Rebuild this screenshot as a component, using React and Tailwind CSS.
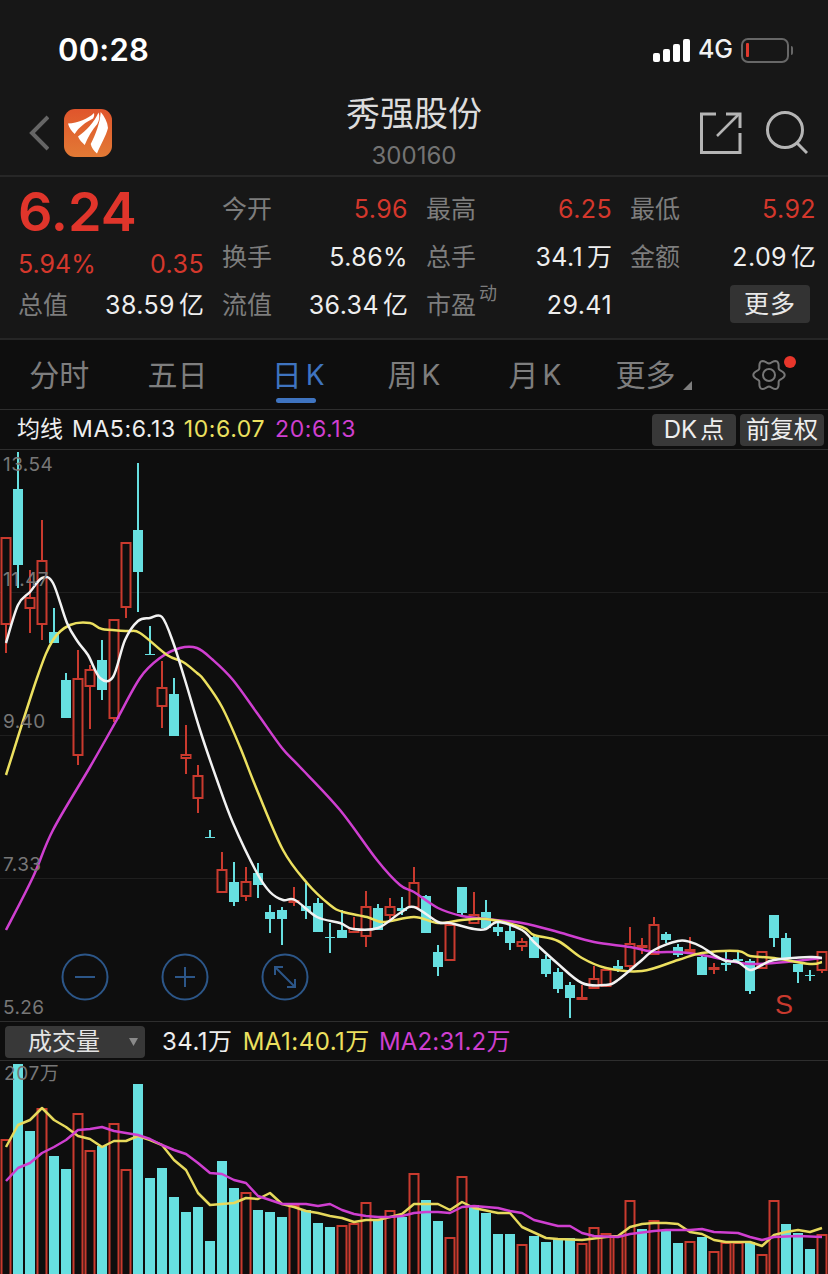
import React from "react";

const RED = "#c93a2e";
const CYAN = "#67dfe0";

// [x index is position in list] color, wickTop, bodyTop, bodyBottom, wickBottom
const candles = [
  ["r", 537, 537, 625, 653], ["c", 452, 489, 565, 588], ["r", 570, 597, 609, 633], ["r", 520, 560, 625, 640],
  ["c", 608, 632, 643, 643], ["c", 673, 680, 718, 718], ["r", 650, 678, 756, 765], ["r", 665, 669, 687, 729],
  ["c", 640, 660, 690, 700], ["r", 619, 619, 719, 722], ["r", 542, 542, 608, 618], ["c", 463, 530, 572, 612],
  ["c", 626, 654, 655, 655], ["r", 661, 687, 707, 728], ["c", 678, 694, 736, 736], ["r", 725, 754, 759, 774],
  ["r", 765, 775, 799, 813], ["c", 830, 837, 838, 838], ["r", 852, 869, 893, 893], ["c", 862, 882, 902, 906],
  ["r", 867, 881, 897, 901], ["c", 863, 873, 885, 898], ["c", 905, 912, 919, 933], ["c", 907, 910, 919, 945],
  ["r", 887, 900, 902, 906], ["c", 883, 906, 911, 919], ["c", 898, 903, 932, 932], ["c", 923, 937, 938, 953],
  ["c", 910, 930, 938, 938], ["r", 917, 928, 933, 933], ["r", 891, 906, 937, 947], ["c", 904, 908, 930, 930],
  ["r", 898, 906, 916, 920], ["c", 897, 908, 911, 915], ["r", 867, 882, 908, 908], ["c", 895, 896, 933, 933],
  ["c", 945, 952, 967, 976], ["r", 924, 924, 961, 961], ["c", 887, 887, 913, 915], ["r", 892, 914, 924, 924],
  ["c", 900, 912, 928, 928], ["c", 920, 927, 932, 936], ["c", 925, 931, 943, 950], ["r", 938, 941, 947, 951],
  ["c", 935, 937, 958, 958], ["c", 955, 959, 974, 977], ["c", 968, 972, 989, 993], ["c", 982, 985, 998, 1018],
  ["r", 985, 997, 999, 999], ["r", 966, 978, 989, 989], ["r", 968, 969, 987, 987], ["c", 960, 966, 969, 972],
  ["r", 927, 943, 967, 972], ["r", 938, 945, 948, 954], ["r", 917, 924, 955, 955], ["c", 932, 934, 940, 943],
  ["c", 944, 947, 955, 957], ["r", 937, 949, 953, 953], ["c", 952, 957, 975, 975], ["r", 963, 967, 969, 974],
  ["c", 951, 963, 965, 971], ["c", 950, 959, 961, 961], ["c", 959, 961, 991, 994], ["r", 951, 951, 969, 969],
  ["c", 915, 915, 938, 947], ["c", 933, 938, 958, 958], ["c", 964, 964, 972, 983], ["c", 970, 975, 976, 981],
  ["r", 951, 951, 971, 973],
];

const ma5 = "6,643 18,605 30,592 42,578 53,583 67,623 78,642 88,655 100,678 113,677 125,640 138,621 150,618 162,617 173,642 185,680 200,730 217,780 233,823 257,873 270,892 283,900 295,900 317,917 340,923 353,929 378,928 400,913 414,907 438,922 450,923 474,929 486,929 498,922 522,930 534,942 557,963 582,983 606,985 618,980 642,960 654,950 678,941 690,942 702,947 714,955 726,961 738,962 750,970 762,965 774,960 810,957 822,958";
const ma10 = "6,775 37,678 53,640 70,625 90,623 102,629 127,631 140,633 167,655 183,662 197,673 204,680 222,707 240,747 257,790 283,850 307,883 330,905 343,912 367,917 383,922 414,917 438,923 462,920 486,919 522,927 534,935 558,941 582,958 606,968 642,971 678,960 702,953 738,951 750,956 774,958 810,964 822,962";
const ma20 = "6,930 33,877 53,830 90,767 115,723 140,678 160,658 180,648 197,648 213,660 233,680 257,713 282,748 300,767 340,810 377,860 400,885 414,892 438,908 462,916 486,919 522,923 558,932 594,942 630,947 654,952 678,952 702,955 726,960 750,964 786,962 822,958";

// [color, top]
const volumes = [
  ["r", 1139], ["c", 1064], ["c", 1131], ["r", 1108], ["c", 1156], ["c", 1169], ["r", 1113], ["r", 1150], ["c", 1146],
  ["r", 1123], ["r", 1169], ["c", 1084], ["c", 1178], ["c", 1168], ["c", 1197], ["c", 1212], ["c", 1207], ["c", 1241],
  ["c", 1161], ["c", 1188], ["r", 1192], ["c", 1210], ["c", 1212], ["c", 1217], ["r", 1205], ["c", 1210], ["c", 1223],
  ["c", 1227], ["r", 1225], ["r", 1223], ["r", 1202], ["c", 1220], ["r", 1210], ["c", 1217], ["r", 1173], ["c", 1200],
  ["c", 1221], ["r", 1237], ["r", 1176], ["c", 1205], ["c", 1213], ["c", 1234], ["c", 1234], ["r", 1244], ["c", 1236],
  ["c", 1242], ["c", 1239], ["c", 1238], ["r", 1243], ["r", 1227], ["r", 1233], ["r", 1235], ["r", 1200], ["c", 1229],
  ["r", 1220], ["c", 1231], ["c", 1243], ["r", 1241], ["c", 1237], ["r", 1251], ["r", 1242], ["r", 1242], ["c", 1242],
  ["r", 1254], ["r", 1200], ["c", 1224], ["c", 1233], ["c", 1249], ["r", 1234],
];

const volMa1 = "6,1147 18,1125 30,1120 42,1108 54,1120 66,1127 78,1136 90,1139 102,1147 114,1141 126,1141 138,1136 150,1140 162,1145 174,1160 186,1170 198,1193 210,1205 222,1204 234,1203 246,1198 258,1199 270,1193 282,1204 294,1207 306,1211 318,1213 330,1216 342,1218 354,1222 366,1220 378,1220 390,1217 402,1214 414,1204 438,1204 450,1210 462,1202 474,1208 498,1213 510,1213 522,1227 546,1238 558,1239 582,1240 606,1237 618,1236 630,1227 642,1224 654,1223 666,1223 678,1224 690,1232 702,1234 714,1240 726,1242 750,1242 762,1246 774,1235 786,1232 798,1230 810,1232 822,1228";
const volMa2 = "6,1181 18,1168 30,1163 42,1153 54,1147 66,1140 78,1130 90,1129 102,1127 114,1131 126,1133 138,1135 150,1139 162,1145 174,1150 186,1154 198,1163 210,1173 222,1174 234,1180 246,1183 258,1196 270,1200 282,1204 294,1204 306,1204 318,1206 330,1204 342,1210 354,1214 366,1216 378,1217 390,1217 402,1216 414,1213 426,1212 438,1212 450,1213 462,1207 474,1206 498,1208 510,1211 522,1213 534,1220 546,1223 558,1226 570,1226 582,1233 594,1236 618,1237 630,1234 654,1231 666,1230 690,1230 702,1229 714,1232 738,1233 750,1237 762,1240 774,1237 798,1236 822,1237";

// six lobed outline of the settings gear
const gearPath = Array.from({ length: 73 }, (_, i) => {
  const a = (i / 72) * Math.PI * 2;
  const r = 13.6 + 2.1 * Math.cos(6 * a);
  return `${i === 0 ? "M" : "L"}${(18 + r * Math.cos(a)).toFixed(2)} ${(18 + r * Math.sin(a)).toFixed(2)}`;
}).join(" ") + "Z";

// catmull-rom through the points, the price averages are drawn as curves
function smooth(points) {
  const p = points.split(" ").map((s) => s.split(",").map(Number));
  let d = `M${p[0][0]} ${p[0][1]}`;
  for (let i = 0; i < p.length - 1; i++) {
    const a = p[Math.max(i - 1, 0)];
    const b = p[i];
    const c = p[i + 1];
    const e = p[Math.min(i + 2, p.length - 1)];
    const c1x = (b[0] + (c[0] - a[0]) / 6).toFixed(1);
    const c1y = (b[1] + (c[1] - a[1]) / 6).toFixed(1);
    const c2x = (c[0] - (e[0] - b[0]) / 6).toFixed(1);
    const c2y = (c[1] - (e[1] - b[1]) / 6).toFixed(1);
    d += ` C${c1x} ${c1y} ${c2x} ${c2y} ${c[0]} ${c[1]}`;
  }
  return d;
}

function Pair({ label, value, unit, color = "text-[#eeeeee]", sup }) {
  return (
    <div className="flex items-center justify-between">
      <span className="relative text-[#7d7d7d]">
        {label}
        {sup && <span className="absolute left-[53px] top-[1px] text-[18px] leading-[24px]">{sup}</span>}
      </span>
      <span className={`${color} tracking-[0.4px]`}>
        {value}
        {unit && <span className="ml-[4px] tracking-normal">{unit}</span>}
      </span>
    </div>
  );
}

function Tab({ label, letter, active, shift }) {
  return (
    <div className={`relative flex h-full items-center justify-center ${shift ? "pl-[5px]" : ""} ${active ? "text-[#3f74c0]" : "text-[#7e7e7e]"}`}>
      {label}
      {letter && <span className="ml-[4px] text-[28px]">{letter}</span>}
      {active && <span className="absolute bottom-[6px] left-[39px] h-[5px] w-[40px] rounded-full bg-[#3f74c0]" />}
    </div>
  );
}

function ChartButton({ children }) {
  return (
    <div className="flex h-[32px] w-[84px] items-center justify-center rounded-[4px] bg-[#383838] text-[24px] text-[#eeeeee]">
      {children}
    </div>
  );
}

function Logo() {
  return (
    <svg width="48" height="48" viewBox="0 0 48 48">
      <defs>
        <linearGradient id="logoBg" x1="0" y1="0" x2="0" y2="1">
          <stop offset="0" stopColor="#e0552c" />
          <stop offset="1" stopColor="#e27a35" />
        </linearGradient>
      </defs>
      <rect width="48" height="48" rx="11" fill="url(#logoBg)" />
      <path d="M4 14.5 C14 14 24 10 30 4 C30.5 6 30 8 29 9.5 C22 13 15 18 10.7 25 C7.5 22 5 18.5 4 14.5Z" fill="#fff" />
      <path d="M14 27.5 C22 22 30.5 13 34.5 3.5 C36 7 35.5 11 33.3 15 C28 21 24 28 20.7 36 C18 33.5 15.5 31 14 27.5Z" fill="#fff" />
      <path d="M26.7 35 C31.5 26 36 14 36.7 3 C40.5 7.5 43.5 13 44 19 C42 27 36.5 36 33 44.5 C30 42 27.5 39 26.7 35Z" fill="#fff" />
    </svg>
  );
}

function StatusBar() {
  return (
    <div className="flex h-[100px] items-center justify-between pl-[58px] pr-[35px]">
      <span className="text-[31px] font-semibold tracking-[0.2px] text-white">00:28</span>
      <div className="flex items-center">
        <div className="mb-[-1px] flex h-[23px] items-end gap-[3px]">
          <span className="h-[9px] w-[7px] rounded-[2px] bg-white" />
          <span className="h-[13px] w-[7px] rounded-[2px] bg-white" />
          <span className="h-[18px] w-[7px] rounded-[2px] bg-white" />
          <span className="h-[23px] w-[7px] rounded-[2px] bg-white" />
        </div>
        <span className="ml-[8px] text-[25px] font-medium text-[#f2f2f2]">4G</span>
        <div className="ml-[8px] flex h-[25px] w-[48px] items-center rounded-[7px] border-2 border-[#676767] pl-[3px]">
          <span className="h-[14px] w-[3px] rounded-[1px] bg-[#e0392d]" />
        </div>
        <span className="ml-[2px] h-[9px] w-[2px] rounded-r-[2px] bg-[#676767]" />
      </div>
    </div>
  );
}

function NavBar() {
  return (
    <div className="relative flex h-[77px] items-center justify-between border-b-2 border-[#272727] pb-[10px] pl-[29px] pr-[20px]">
      <div className="flex items-center gap-[15px]">
        <svg width="20" height="36" viewBox="0 0 20 36" fill="none" stroke="#666666" strokeWidth="4">
          <path d="M19 2 L3 18 L19 34" />
        </svg>
        <Logo />
      </div>
      <div className="absolute left-0 right-0 top-0 flex flex-col items-center">
        <span className="mt-[-1px] text-[34px] leading-[30px] text-[#dcdcdc]">秀强股份</span>
        <span className="mt-[13px] text-[24px] leading-[28px] text-[#737373]">300160</span>
      </div>
      <div className="flex items-center gap-[22px]">
        <svg width="44" height="44" viewBox="0 0 44 44" fill="none" stroke="#b5b5b5" strokeWidth="3">
          <path d="M18 3 H3.5 V41.5 H42 V22" />
          <path d="M19 25 L41 3" strokeWidth="2.5" />
          <path d="M28 3 H42 V17" />
        </svg>
        <svg width="44" height="44" viewBox="0 0 44 44" fill="none" stroke="#b5b5b5" strokeWidth="3">
          <circle cx="21" cy="19" r="17.5" />
          <path d="M33 32 L43 42" />
        </svg>
      </div>
    </div>
  );
}

function Quote() {
  return (
    <div className="grid h-[163px] grid-cols-[repeat(4,186px)] grid-rows-[repeat(3,48px)] gap-x-[18px] border-b-2 border-[#262626] pl-[18px] pt-[8px] text-[25px] leading-[48px]">
      <div className="text-[54px] font-semibold leading-[54px] text-[#e0352b]">6.24</div>
      <Pair label="今开" value="5.96" color="text-[#d4372c]" />
      <Pair label="最高" value="6.25" color="text-[#d4372c]" />
      <Pair label="最低" value="5.92" color="text-[#d4372c]" />
      <div className="flex items-center justify-between pt-[14px] text-[#d4372c]">
        <span>5.94%</span>
        <span className="tracking-[0.4px]">0.35</span>
      </div>
      <Pair label="换手" value="5.86%" />
      <Pair label="总手" value="34.1" unit="万" />
      <Pair label="金额" value="2.09" unit="亿" />
      <Pair label="总值" value="38.59" unit="亿" />
      <Pair label="流值" value="36.34" unit="亿" />
      <Pair label="市盈" sup="动" value="29.41" />
      <div className="flex items-center justify-end pb-[2px] pr-[6px]">
        <div className="flex h-[38px] w-[80px] items-center justify-center rounded-[4px] bg-[#333333] tracking-[1px] text-[#e8e8e8]">
          更多
        </div>
      </div>
    </div>
  );
}

function Tabs() {
  return (
    <div className="grid h-[70px] grid-cols-7 items-center border-b border-[#2e2e2e] text-[30px] leading-none">
      <Tab label="分时" />
      <Tab label="五日" />
      <Tab label="日" letter="K" active shift />
      <Tab label="周" letter="K" />
      <Tab label="月" letter="K" shift />
      <div className="relative flex h-full items-center justify-center pr-[10px] text-[#7e7e7e]">
        更多
        <svg className="absolute left-[92px] top-[41px]" width="9" height="9" viewBox="0 0 9 9">
          <path d="M9 0 V9 H0Z" fill="#7e7e7e" />
        </svg>
      </div>
      <div className="relative flex h-full items-center justify-center">
        <svg width="36" height="36" viewBox="0 0 36 36" fill="none" stroke="#767676" strokeWidth="2">
          <path d={gearPath} />
          <circle cx="18" cy="18" r="6" />
        </svg>
        <span className="absolute left-[74px] top-[16px] h-[12px] w-[12px] rounded-full bg-[#e8362b]" />
      </div>
    </div>
  );
}

function MaRow() {
  return (
    <div className="flex h-[40px] items-center justify-between border-b border-[#2e2e2e] pl-[17px] pr-[4px] text-[23px]">
      <div className="flex items-center tracking-[0.6px]">
        <span className="tracking-normal text-[#eeeeee]">均线</span>
        <span className="ml-[9px] text-[#eeeeee]">MA5:6.13</span>
        <span className="ml-[8px] text-[#ece05f]">10:6.07</span>
        <span className="ml-[10px] text-[#cf3fd0]">20:6.13</span>
      </div>
      <div className="flex gap-[4px]">
        <ChartButton>
          DK<span className="ml-[3px]">点</span>
        </ChartButton>
        <ChartButton>前复权</ChartButton>
      </div>
    </div>
  );
}

function Lines({ points, color, width = 2.5 }) {
  return <polyline points={points} fill="none" stroke={color} strokeWidth={width} strokeLinejoin="round" />;
}

function Curve({ points, color }) {
  return <path d={smooth(points)} fill="none" stroke={color} strokeWidth="2.5" strokeLinejoin="round" />;
}

function AxisLabel({ top, children }) {
  return (
    <span className="absolute left-[3px] text-[19px] leading-[24px] tracking-[0.4px] text-[#777777]" style={{ top }}>
      {children}
    </span>
  );
}

function PriceChart() {
  return (
    <div className="relative h-[572px] border-b border-[#2e2e2e]">
      <svg className="block" width="828" height="571" viewBox="0 450 828 571">
        {[592, 735, 878].map((y) => (
          <line key={y} x1="0" x2="828" y1={y + 0.5} y2={y + 0.5} stroke="#1f1f1f" strokeWidth="1" />
        ))}
        {candles.map(([kind, wickTop, bodyTop, bodyBottom, wickBottom], i) => {
          const x = 6 + i * 12;
          const color = kind === "r" ? RED : CYAN;
          return (
            <g key={i}>
              <line x1={x} x2={x} y1={wickTop} y2={bodyTop} stroke={color} strokeWidth="2" />
              <line x1={x} x2={x} y1={bodyBottom} y2={wickBottom} stroke={color} strokeWidth="2" />
              {kind === "r" ? (
                <rect x={x - 4.5} y={bodyTop + 1} width="9" height={Math.max(bodyBottom - bodyTop - 2, 1)} fill="#0e0e0e" stroke={color} strokeWidth="2" />
              ) : (
                <rect x={x - 5} y={bodyTop} width="10" height={Math.max(bodyBottom - bodyTop, 1)} fill={color} />
              )}
            </g>
          );
        })}
        <Curve points={ma20} color="#cf3fd0" />
        <Curve points={ma10} color="#ece05f" />
        <Curve points={ma5} color="#f2f2f2" />
      </svg>
      <AxisLabel top={3}>13.54</AxisLabel>
      <AxisLabel top={118}>11.47</AxisLabel>
      <AxisLabel top={260}>9.40</AxisLabel>
      <AxisLabel top={403}>7.33</AxisLabel>
      <AxisLabel top={546}>5.26</AxisLabel>
      <span className="absolute left-[775px] top-[540px] font-['Liberation_Sans',sans-serif] text-[27px] leading-[30px] text-[#c93a2e]">S</span>
      <div className="absolute left-[61px] top-[503px] flex gap-[52px]">
        <svg width="48" height="48" viewBox="0 0 48 48" fill="none" stroke="#2c5688" strokeWidth="2">
          <circle cx="24" cy="24" r="22.5" />
          <path d="M14 24 H34" />
        </svg>
        <svg width="48" height="48" viewBox="0 0 48 48" fill="none" stroke="#2c5688" strokeWidth="2">
          <circle cx="24" cy="24" r="22.5" />
          <path d="M14 24 H34 M24 14 V34" />
        </svg>
        <svg width="48" height="48" viewBox="0 0 48 48" fill="none" stroke="#2c5688" strokeWidth="2">
          <circle cx="24" cy="24" r="22.5" />
          <path d="M14 14 L34 34 M14 22 V14 H22 M34 26 V34 H26" />
        </svg>
      </div>
    </div>
  );
}

function VolumeHeader() {
  return (
    <div className="flex h-[39px] items-center border-b border-[#2e2e2e] pl-[5px] pt-[2px] text-[24px]">
      <div className="relative flex h-[32px] w-[140px] items-center rounded-[4px] bg-[#383838] pl-[23px] text-[#e4e4e4]">
        成交量
        <svg className="absolute right-[7px] top-[12px]" width="9" height="8" viewBox="0 0 9 8">
          <path d="M0 0 H9 L4.5 8Z" fill="#8a8a8a" />
        </svg>
      </div>
      <span className="ml-[17px] tracking-[0.5px] text-[#eeeeee]">34.1万</span>
      <span className="ml-[10px] tracking-[0.5px] text-[#ece05f]">MA1:40.1万</span>
      <span className="ml-[9px] tracking-[0.2px] text-[#cf3fd0]">MA2:31.2万</span>
    </div>
  );
}

function VolumeChart() {
  return (
    <div className="relative h-[213px]">
      <svg className="block" width="828" height="213" viewBox="0 1061 828 213">
        {volumes.map(([kind, top], i) => {
          const x = 6 + i * 12;
          return kind === "r" ? (
            <rect key={i} x={x - 4.5} y={top + 1} width="9" height={1280 - top} fill="#0e0e0e" stroke={RED} strokeWidth="2" />
          ) : (
            <rect key={i} x={x - 5} y={top} width="10" height={1274 - top} fill={CYAN} />
          );
        })}
        <Lines points={volMa1} color="#e6d95c" />
        <Lines points={volMa2} color="#cf3fd0" />
      </svg>
      <span className="absolute left-[4px] top-[1px] text-[19px] leading-[24px] tracking-[0.6px] text-[#777777]">207万</span>
    </div>
  );
}

export default function App() {
  return (
    <div className="h-[1274px] w-[828px] overflow-hidden bg-[#0e0e0e] font-['Inter','Noto_Sans_CJK_SC',sans-serif] font-normal">
      <div className="bg-[#171717]">
        <StatusBar />
        <NavBar />
        <Quote />
      </div>
      <Tabs />
      <MaRow />
      <PriceChart />
      <VolumeHeader />
      <VolumeChart />
    </div>
  );
}
